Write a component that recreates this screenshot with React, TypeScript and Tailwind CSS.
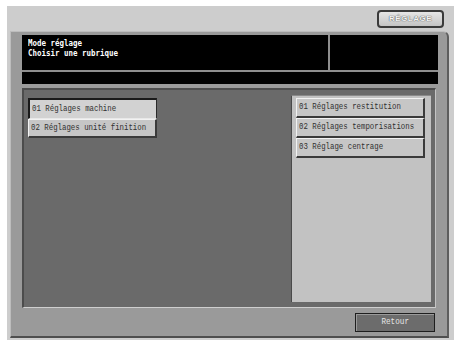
import React from "react";

const mono = "font-['Liberation_Mono',monospace]";

function Btn({ label, selected, w = "w-[129px]", h = "h-[20px]" }: { label: string; selected?: boolean; w?: string; h?: string }) {
  const cls = selected
    ? "border-t-2 border-l-2 border-r border-b border-t-[#1a1a1a] border-l-[#1a1a1a] border-r-[#2a2a2a] border-b-[#e8e8e8] bg-[#d2d2d2]"
    : "border-t border-l border-r-2 border-b-2 border-t-[#f2f2f2] border-l-[#f2f2f2] border-r-[#3a3a3a] border-b-[#3a3a3a] bg-[#c6c6c6]";
  return (
    <div className={`${w} ${h} ${cls} flex items-center pl-[2px] overflow-hidden`}>
      <span className={`${mono} text-[9px] leading-none text-[#303030] inline-block origin-left scale-x-[0.82] whitespace-nowrap`}>{label}</span>
    </div>
  );
}

export default function App() {
  return (
    <div className="w-[454px] h-[340px] bg-white pl-[7px] pt-[6px] overflow-hidden">
      <div className="w-[447px] h-[334px] bg-[#cdcdcd] flex flex-col">
        <div className="h-[25px] flex justify-end pr-[10px] pt-[4px]">
          <div className="w-[67px] h-[18px] rounded-[4px] border-2 border-[#3a3a3a] bg-gradient-to-b from-[#e6e6e6] to-[#c4c4c4] flex items-center justify-center">
            <span className="font-['Liberation_Sans',sans-serif] font-bold text-[8px] leading-none tracking-[0.5px] text-[#f4f4f4] [text-shadow:0_0_1px_#555,0_0_1px_#555]">RÉGLAGE</span>
          </div>
        </div>
        <div className="ml-[3px] w-[439px] h-[307px] bg-[#9a9a9a] border-l border-t border-l-[#bdbdbd] border-t-[#bdbdbd] border-r-2 border-b-2 border-r-[#5e5e5e] border-b-[#4e4e4e] rounded-tr-[6px] pl-[11px] pt-[3px] flex flex-col">
          {/* header */}
          <div className="w-[416px] flex flex-col bg-[#8e8e8e]">
            <div className="h-[35px] flex">
              <div className="w-[306px] bg-black pl-[6px] pt-[3px]">
                <div className="font-['DejaVu_Sans_Mono',monospace] font-bold text-[9px] leading-[10px] text-white inline-block origin-left scale-x-[0.83] whitespace-nowrap">
                  <div>Mode réglage</div>
                  <div>Choisir une rubrique</div>
                </div>
              </div>
              <div className="w-[2px]" />
              <div className="flex-1 bg-black" />
            </div>
            <div className="h-[2px]" />
            <div className="h-[12px] bg-black" />
          </div>
          {/* content frame */}
          <div className="mt-[4px] w-[414px] h-[220px] bg-[#6a6a6a] border-t-2 border-l-2 border-t-[#4c4c4c] border-l-[#4c4c4c] border-b border-r border-b-[#cfcfcf] border-r-[#c4c4c4] flex justify-between pl-[4px] pt-[8px] pr-[4px] pb-[5px]">
            <div className="flex flex-col">
              <Btn label="01 Réglages machine" selected h="h-[21px]" />
              <Btn label="02 Réglages unité finition" h="h-[19px]" />
            </div>
            <div className="w-[140px] h-[207px] -mt-[3px] bg-[#c2c2c2] border-l border-t border-l-[#4a4a4a] border-t-[#8a8a8a] pl-[4px] pt-[2px] flex flex-col">
              <Btn label="01 Réglages restitution" />
              <Btn label="02 Réglages temporisations" />
              <Btn label="03 Réglage centrage" />
            </div>
          </div>
          {/* bottom */}
          <div className="w-[414px] flex justify-end pt-[5px]">
            <div className="w-[80px] h-[19px] mr-[1px] bg-[#6c6c6c] border border-[#1e1e1e] shadow-[inset_1px_1px_0_#9a9a9a] flex items-center justify-center">
              <span className={`${mono} text-[9px] leading-none text-[#e6e6e6] inline-block scale-x-[0.85]`}>Retour</span>
            </div>
          </div>
        </div>
      </div>
    </div>
  );
}
